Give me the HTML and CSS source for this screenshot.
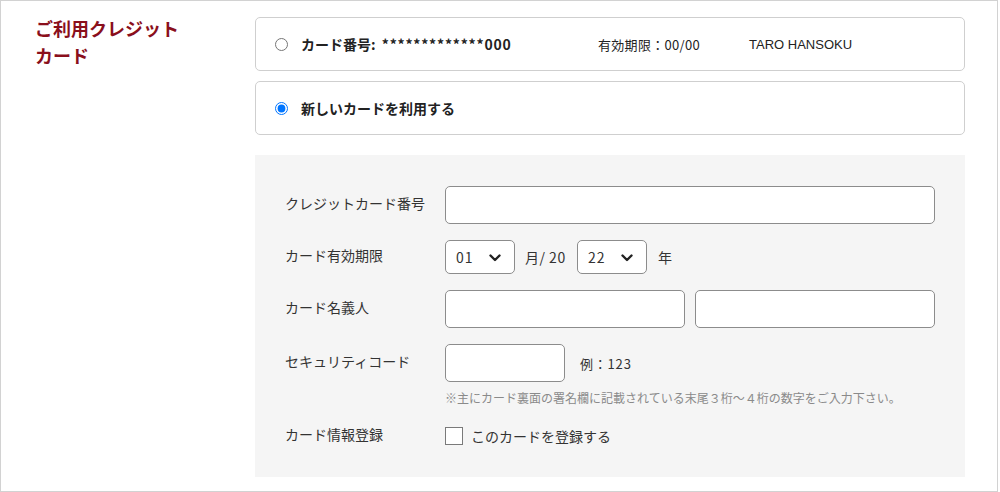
FILE: index.html
```html
<!DOCTYPE html>
<html lang="ja">
<head>
<meta charset="utf-8">
<title>ご利用クレジットカード</title>
<link rel="stylesheet" href="styles.css">
</head>
<body>
<div class="frame">
  <div class="section">
    <h2 class="title">ご利用クレジットカード</h2>
    <div class="main">
      <label class="card-option">
        <input type="radio" name="card" class="radio">
        <span class="opt-number">カード番号: <span class="masked">*************000</span></span>
        <span class="opt-exp">有効期限：00/00</span>
        <span class="opt-name">TARO HANSOKU</span>
      </label>
      <label class="card-option">
        <input type="radio" name="card" class="radio" checked>
        <span class="opt-new">新しいカードを利用する</span>
      </label>

      <div class="panel">
        <div class="row row-tall">
          <div class="label">クレジットカード番号</div>
          <div class="field"><input type="text" class="input input-full"></div>
        </div>
        <div class="row row-select">
          <div class="label">カード有効期限</div>
          <div class="field">
            <span class="select-wrap">
              <select class="select"><option>01</option></select>
              <svg class="chev" width="12" height="8" viewBox="0 0 12 8"><path d="M1.5 1.5 L6 6 L10.5 1.5" fill="none" stroke="#222" stroke-width="2.4" stroke-linecap="round" stroke-linejoin="round"/></svg>
            </span>
            <span class="unit unit-month">月/ 20</span>
            <span class="select-wrap">
              <select class="select"><option>22</option></select>
              <svg class="chev" width="12" height="8" viewBox="0 0 12 8"><path d="M1.5 1.5 L6 6 L10.5 1.5" fill="none" stroke="#222" stroke-width="2.4" stroke-linecap="round" stroke-linejoin="round"/></svg>
            </span>
            <span class="unit unit-year">年</span>
          </div>
        </div>
        <div class="row row-tall">
          <div class="label">カード名義人</div>
          <div class="field field-names">
            <input type="text" class="input input-half">
            <input type="text" class="input input-half">
          </div>
        </div>
        <div class="row row-tall">
          <div class="label">セキュリティコード</div>
          <div class="field">
            <input type="text" class="input input-code">
            <span class="example">例：123</span>
          </div>
        </div>
        <div class="note">※主にカード裏面の署名欄に記載されている末尾３桁～４桁の数字をご入力下さい。</div>
        <div class="row row-check">
          <div class="label">カード情報登録</div>
          <label class="field check-field">
            <span class="checkbox"></span>
            <span class="check-text">このカードを登録する</span>
          </label>
        </div>
      </div>
    </div>
  </div>
</div>
</body>
</html>
```

FILE: styles.css
```css
html, body {
  margin: 0;
  padding: 0;
  background: #ffffff;
}

body {
  font-family: "Noto Sans CJK JP", "Noto Sans", sans-serif;
  color: #333333;
}

.frame {
  box-sizing: border-box;
  width: 998px;
  height: 492px;
  border: 1px solid #d2d2d2;
  overflow: hidden;
}

.section {
  display: flex;
  padding: 16px 0 0 34px;
}

.title {
  box-sizing: border-box;
  width: 220px;
  margin: -2px 0 0 0;
  padding-right: 60px;
  flex-shrink: 0;
  font-size: 18px;
  line-height: 27px;
  font-weight: 700;
  color: #8a0f1c;
}

.main {
  width: 710px;
  display: flex;
  flex-direction: column;
}

.card-option {
  box-sizing: border-box;
  height: 54px;
  border: 1px solid #cfcfcf;
  border-radius: 5px;
  display: flex;
  align-items: center;
  padding-left: 19px;
  margin-bottom: 10px;
  font-size: 14px;
  color: #222222;
}

.card-option + .card-option {
  margin-bottom: 20px;
}

.radio {
  width: 13px;
  height: 13px;
  margin: 0 13px 0 0;
  flex-shrink: 0;
}

.opt-number {
  width: 297px;
  font-weight: 700;
  flex-shrink: 0;
}

.masked {
  margin-left: 3px;
  letter-spacing: 0.8px;
}

.opt-exp {
  width: 151px;
  font-size: 13px;
  flex-shrink: 0;
  letter-spacing: 0.3px;
}

.opt-name {
  font-family: "Liberation Sans", Arial, sans-serif;
  font-size: 13px;
}

.opt-new {
  font-weight: 700;
}

.panel {
  box-sizing: border-box;
  height: 322px;
  background: #f5f5f5;
  padding: 31px 30px 0 30px;
}

.row {
  display: flex;
  align-items: center;
  margin-bottom: 16px;
}

.row-tall {
  height: 38px;
}

.row-select {
  height: 34px;
}

.label {
  width: 160px;
  flex-shrink: 0;
  font-size: 14px;
  line-height: 20px;
  color: #333333;
  margin-top: -4px;
}

.field {
  display: flex;
  align-items: center;
  height: 100%;
}

.input {
  box-sizing: border-box;
  height: 38px;
  border: 1px solid #8c8c8c;
  border-radius: 5px;
  background: #ffffff;
  margin: 0;
  padding: 0 10px;
  font-size: 14px;
}

.input-full {
  width: 490px;
}

.field-names {
  gap: 10px;
}

.input-half {
  width: 240px;
}

.input-code {
  width: 120px;
}

.example {
  margin-left: 15px;
  font-size: 13px;
  color: #333333;
  letter-spacing: 0.8px;
}

.select-wrap {
  position: relative;
  display: inline-block;
  height: 34px;
}

.select {
  -webkit-appearance: none;
  appearance: none;
  box-sizing: border-box;
  width: 70px;
  height: 34px;
  border: 1px solid #8c8c8c;
  border-radius: 5px;
  background: #ffffff;
  padding: 0 0 0 10px;
  margin: 0;
  font-family: "Noto Sans CJK JP", "Noto Sans", sans-serif;
  font-size: 14px;
  letter-spacing: 1px;
  color: #333333;
}

.chev {
  position: absolute;
  right: 14px;
  top: 14px;
  pointer-events: none;
}

.unit {
  font-size: 14px;
  margin: 0 10px;
  color: #333333;
}

.unit-month {
  width: 42px;
  white-space: pre;
  letter-spacing: 0.5px;
}

.unit-year {
  margin-left: 11px;
}

.note {
  margin: -9px 0 0 160px;
  font-size: 12px;
  line-height: 18px;
  color: #8a8a8a;
  white-space: nowrap;
}

.row-check {
  margin-top: 17px;
  height: 24px;
}

.check-field {
  gap: 8px;
}

.checkbox {
  box-sizing: border-box;
  width: 18px;
  height: 18px;
  border: 1px solid #7a7a7a;
  background: #ffffff;
  flex-shrink: 0;
}

.check-text {
  font-size: 14px;
  color: #333333;
}
```
